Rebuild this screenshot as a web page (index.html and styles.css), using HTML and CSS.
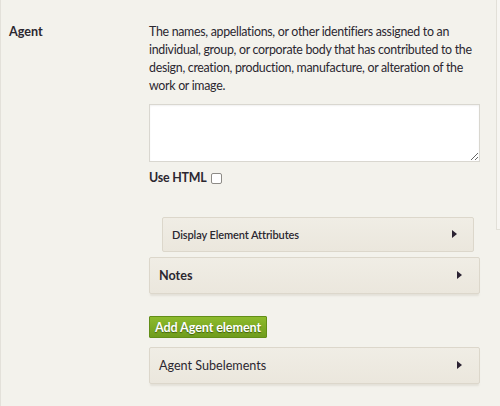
FILE: index.html
```html
<!DOCTYPE html>
<html>
<head>
<meta charset="utf-8">
<link rel="stylesheet" href="styles.css">
</head>
<body>
<div class="page">
  <div class="field">
    <div class="label">Agent</div>
    <div class="content">
      <p class="desc">The names, appellations, or other identifiers assigned to an individual, group, or corporate body that has contributed to the design, creation, production, manufacture, or alteration of the work or image.</p>
      <textarea class="input"></textarea>
      <label class="html-toggle">Use HTML <span class="checkbox"></span></label>
      <div class="panel panel-sub">
        <span class="panel-title small">Display Element Attributes</span>
        <span class="arrow"></span>
      </div>
      <div class="panel">
        <span class="panel-title bold">Notes</span>
        <span class="arrow"></span>
      </div>
      <button class="add-btn">Add Agent element</button>
      <div class="panel">
        <span class="panel-title">Agent Subelements</span>
        <span class="arrow"></span>
      </div>
    </div>
    <div class="sidebar"></div>
  </div>
</div>
</body>
</html>
```

FILE: styles.css
```css
html, body {
  margin: 0;
  padding: 0;
  height: 100%;
  overflow: hidden;
}
body {
  background: #f3f2ec;
  font-family: Lato, "Open Sans", sans-serif;
  color: #2b2730;
}
.page {
  height: 100%;
  border-left: 1px solid #e3e1da;
  box-sizing: border-box;
}
.field {
  display: flex;
  align-items: flex-start;
}
.label {
  width: 140px;
  flex: none;
  padding-left: 8px;
  padding-top: 23px;
  font-size: 12.6px;
  line-height: 18px;
  font-weight: bold;
}
.content {
  width: 331px;
  flex: none;
  padding-top: 23px;
  display: flex;
  flex-direction: column;
  align-items: flex-start;
}
.desc {
  margin: 0;
  font-size: 12.4px;
  letter-spacing: -0.3px;
  line-height: 18px;
  width: 333px;
}
.input {
  display: block;
  margin: 9px 0 0;
  width: 331px;
  height: 58px;
  box-sizing: border-box;
  border: 1px solid #d9d7d0;
  background: #fff;
  resize: vertical;
  box-shadow: inset 0 1px 2px rgba(0,0,0,0.06);
}
.html-toggle {
  margin-top: 7px;
  display: flex;
  align-items: center;
  gap: 4px;
  font-size: 12.4px;
  line-height: 18px;
  font-weight: bold;
  letter-spacing: -0.2px;
}
.checkbox {
  width: 9px;
  height: 9px;
  border: 1px solid #8d8b86;
  border-radius: 2px;
  background: #fff;
}
.panel {
  box-sizing: border-box;
  width: 331px;
  height: 37px;
  display: flex;
  align-items: center;
  justify-content: space-between;
  padding: 0 17px 0 9px;
  background: linear-gradient(#f0ede5, #ebe7dd);
  border: 1px solid #dcd7cb;
  border-radius: 2px;
  box-shadow: 0 3px 2px -1px #e3e0d8;
  font-size: 12.6px;
}
.panel-sub {
  margin-top: 30px;
  margin-left: 13px;
  width: 312px;
  height: 35px;
  box-shadow: none;
  padding-right: 16px;
}
.panel-sub + .panel {
  margin-top: 5px;
}
.panel-title.small {
  font-size: 11px;
  font-weight: 600;
  letter-spacing: -0.1px;
}
.panel-title.bold {
  font-weight: bold;
}
.arrow {
  width: 0;
  height: 0;
  border-top: 4px solid transparent;
  border-bottom: 4px solid transparent;
  border-left: 5px solid #2b2232;
  margin-top: -2px;
}
.add-btn {
  margin-top: 22px;
  margin-bottom: 9px;
  height: 22px;
  width: 118px;
  padding: 0;
  font-family: inherit;
  font-size: 12.6px;
  font-weight: bold;
  letter-spacing: -0.1px;
  color: #fff;
  text-shadow: 0 1px 1px #3f5e0d;
  background: linear-gradient(#8dbb2c, #6f9c1c);
  border: 1px solid #628e17;
  border-radius: 1px;
}
.sidebar {
  margin-left: 16px;
  flex: 1;
  min-width: 0;
  height: 229px;
  background: #f7f6f2;
  border: 1px solid #e2e0d8;
  border-top: none;
  border-right: none;
}
```
